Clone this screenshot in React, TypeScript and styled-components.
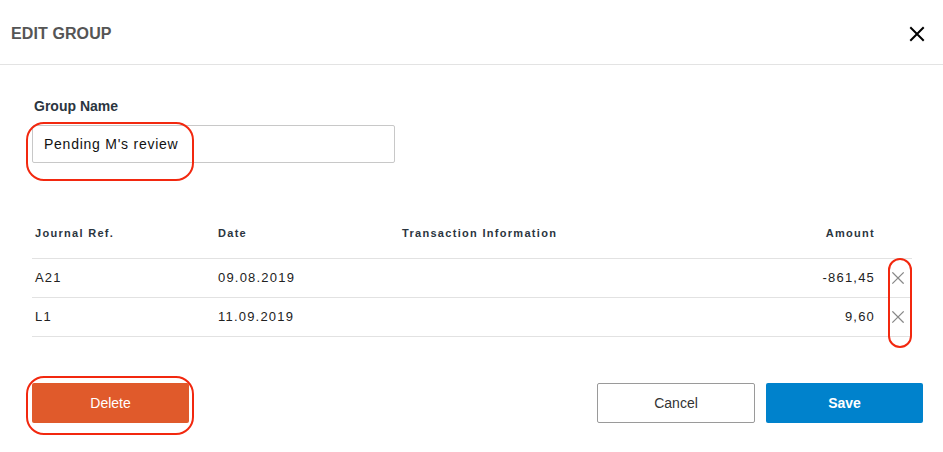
import React from "react";
import styled, { createGlobalStyle } from "styled-components";

const Global = createGlobalStyle`
  html, body { margin: 0; padding: 0; background: #fff; }
  body { font-family: "Liberation Sans", Arial, sans-serif; }
  * { box-sizing: border-box; }
`;

const Dialog = styled.div`
  width: 943px;
  height: 452px;
  background: #fff;
  display: flex;
  flex-direction: column;
`;

const Header = styled.header`
  height: 65px;
  border-bottom: 1px solid #e3e3e3;
  display: flex;
  align-items: center;
  justify-content: space-between;
  padding: 4px 17px 0 11px;
`;

const Title = styled.h1`
  margin: 0;
  font-size: 16px;
  font-weight: 700;
  color: #555;
  letter-spacing: 0.1px;
`;

const CloseBtn = styled.button`
  border: 0;
  background: none;
  padding: 0;
  width: 18px;
  height: 18px;
  display: flex;
  align-items: center;
  justify-content: center;
  cursor: pointer;
`;

const Body = styled.div`
  padding: 33px 20px 0 32px;
  display: flex;
  flex-direction: column;
`;

const Label = styled.label`
  font-size: 14px;
  font-weight: 700;
  color: #2b3540;
  line-height: 17px;
  padding-left: 2px;
`;

const Annotated = styled.div`
  position: relative;
  align-self: flex-start;
`;

const Ring = styled.span<{ $t: number; $l: number; $w: number; $h: number; $r: number }>`
  position: absolute;
  top: ${(p) => p.$t}px;
  left: ${(p) => p.$l}px;
  width: ${(p) => p.$w}px;
  height: ${(p) => p.$h}px;
  border: 2px solid #f2280f;
  border-radius: ${(p) => p.$r}px;
  pointer-events: none;
`;

const Input = styled.input`
  margin-top: 10px;
  width: 363px;
  height: 38px;
  border: 1px solid #c8c8c8;
  border-radius: 2px;
  padding: 0 11px;
  font-family: "Liberation Sans", Arial, sans-serif;
  font-size: 14px;
  letter-spacing: 0.75px;
  color: #111;
  outline: none;
`;

const Table = styled.div`
  margin-top: 46px;
  width: 880px;
  position: relative;
`;

const Row = styled.div<{ $head?: boolean }>`
  display: grid;
  grid-template-columns: 183px 184px 1fr 130px 32px;
  align-items: ${(p) => (p.$head ? "start" : "center")};
  height: ${(p) => (p.$head ? 50 : 39)}px;
  padding-top: ${(p) => (p.$head ? 17 : 0)}px;
  border-bottom: 1px solid #e2e2e2;
`;

const Cell = styled.div<{ $head?: boolean; $right?: boolean }>`
  padding: 0 ${(p) => (p.$right ? 5 : 0)}px 0 3px;
  text-align: ${(p) => (p.$right ? "right" : "left")};
  font-size: ${(p) => (p.$head ? 11 : 13)}px;
  font-weight: ${(p) => (p.$head ? 700 : 400)};
  letter-spacing: ${(p) => (p.$head ? 1.3 : 1.2)}px;
  color: ${(p) => (p.$head ? "#2b3540" : "#222")};
  line-height: 14px;
`;

const IconCell = styled.div`
  display: flex;
  justify-content: center;
  padding-left: 4px;
`;

const RemoveBtn = styled.button`
  border: 0;
  background: none;
  padding: 0;
  width: 14px;
  height: 14px;
  display: flex;
  align-items: center;
  justify-content: center;
  cursor: pointer;
`;

const Footer = styled.div`
  margin-top: 46px;
  display: flex;
  align-items: center;
  justify-content: space-between;
`;

const Actions = styled.div`
  display: flex;
  gap: 11px;
`;

const Button = styled.button<{ $variant: "danger" | "primary" | "plain" }>`
  width: 158px;
  height: 40px;
  border-radius: 2px;
  font-family: "Liberation Sans", Arial, sans-serif;
  font-size: 14px;
  cursor: pointer;
  ${(p) =>
    p.$variant === "danger"
      ? `background:#e05a2b;color:#fff;border:0;font-weight:400;width:157px;`
      : p.$variant === "primary"
      ? `background:#0082cc;color:#fff;border:0;font-weight:700;width:157px;`
      : `background:#fff;color:#333;border:1px solid #9a9a9a;`}
`;

const XIcon = ({ size, color, width }: { size: number; color: string; width: number }) => (
  <svg width={size} height={size} viewBox="0 0 16 16" fill="none">
    <path d="M2 2L14 14M14 2L2 14" stroke={color} strokeWidth={width} strokeLinecap="square" />
  </svg>
);

const rows = [
  { ref: "A21", date: "09.08.2019", info: "", amount: "-861,45" },
  { ref: "L1", date: "11.09.2019", info: "", amount: "9,60" },
];

export default function App() {
  return (
    <>
      <Global />
      <Dialog>
        <Header>
          <Title>EDIT GROUP</Title>
          <CloseBtn aria-label="Close">
            <XIcon size={16} color="#000" width={2} />
          </CloseBtn>
        </Header>
        <Body>
          <Label>Group Name</Label>
          <Annotated>
            <Input defaultValue="Pending M's review" />
            <Ring $t={7} $l={-6} $w={168} $h={59} $r={18} />
          </Annotated>
          <Table>
            <Row $head>
              <Cell $head>Journal Ref.</Cell>
              <Cell $head>Date</Cell>
              <Cell $head>Transaction Information</Cell>
              <Cell $head $right>Amount</Cell>
              <div />
            </Row>
            {rows.map((r) => (
              <Row key={r.ref}>
                <Cell>{r.ref}</Cell>
                <Cell>{r.date}</Cell>
                <Cell>{r.info}</Cell>
                <Cell $right>{r.amount}</Cell>
                <IconCell>
                  <RemoveBtn aria-label="Remove">
                    <XIcon size={14} color="#888" width={1.4} />
                  </RemoveBtn>
                </IconCell>
              </Row>
            ))}
            <Ring $t={49} $l={856} $w={24} $h={90} $r={12} />
          </Table>
          <Footer>
            <Annotated>
              <Button $variant="danger">Delete</Button>
              <Ring $t={-7} $l={-6} $w={168} $h={59} $r={18} />
            </Annotated>
            <Actions>
              <Button $variant="plain">Cancel</Button>
              <Button $variant="primary">Save</Button>
            </Actions>
          </Footer>
        </Body>
      </Dialog>
    </>
  );
}
